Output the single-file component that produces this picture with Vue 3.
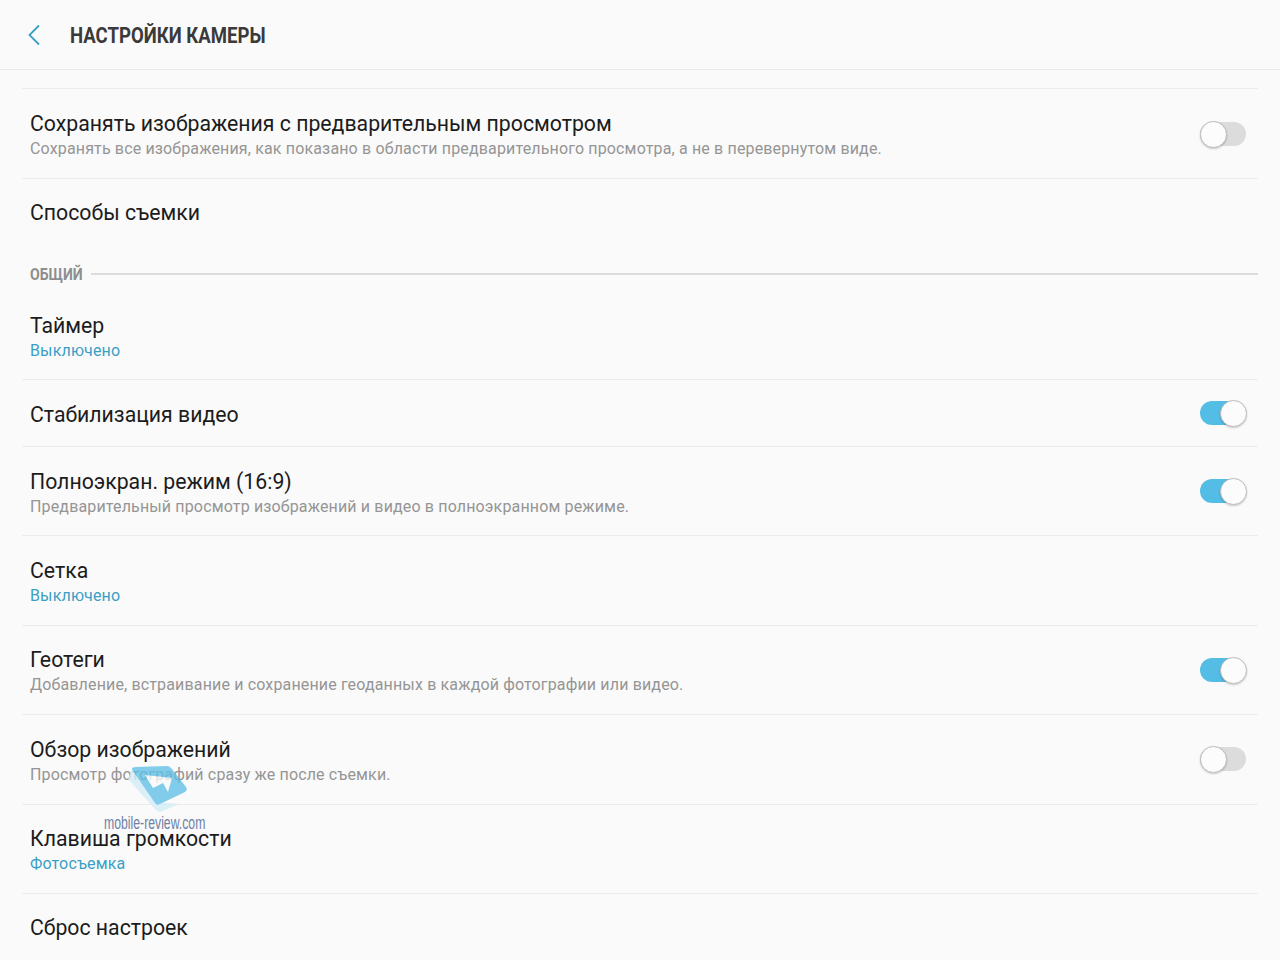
<template>
  <div class="screen">
    <header class="topbar">
      <svg class="back" width="14" height="22" viewBox="0 0 14 22">
        <path d="M12 1.5 L2.5 11 L12 20.5" fill="none" stroke="#3a9fc4" stroke-width="1.8" />
      </svg>
      <h1>НАСТРОЙКИ КАМЕРЫ</h1>
    </header>

    <div class="list">
      <template v-for="row in rows" :key="row.title">
        <div v-if="row.section" class="section">
          <span>{{ row.section }}</span>
          <i></i>
        </div>
        <div class="row" :class="{ first: row.first, plain: !row.sub && !row.value, nosep: row.nosep }">
          <div class="texts">
            <div class="title">{{ row.title }}</div>
            <div v-if="row.sub" class="sub">{{ row.sub }}</div>
            <div v-if="row.value" class="value">{{ row.value }}</div>
          </div>
          <div v-if="row.toggle !== undefined" class="toggle" :class="{ on: row.toggle }">
            <span class="knob"></span>
          </div>
        </div>
      </template>
    </div>

    <div class="watermark">
      <svg width="70" height="56" viewBox="0 0 70 56">
        <path d="M3 17 L30 47 Q33 51 38 49 L54 42 L30 40 L8 6 Z" fill="#d3edf8" />
        <path d="M8 9 Q5 5 11 5 L42 4 Q45 4 47 7 L61 25 Q63 28 60 30 L35 42 Q32 44 30 41 Z" fill="#5ec0e6" />
        <path d="M20 13 L47 16 L43 30 L38 21 L28 26 Z" fill="#fafafa" />
      </svg>
      <span>mobile-review.com</span>
    </div>
  </div>
</template>

<script setup>
const desc1 = 'Сохранять все изображения, как показано в области предварительного просмотра, а не в перевернутом виде.'

const rows = [
  { title: 'Сохранять изображения с предварительным просмотром', sub: desc1, toggle: false, first: true },
  { title: 'Способы съемки', nosep: true },
  { title: 'Таймер', value: 'Выключено', section: 'ОБЩИЙ' },
  { title: 'Стабилизация видео', toggle: true },
  { title: 'Полноэкран. режим (16:9)', sub: 'Предварительный просмотр изображений и видео в полноэкранном режиме.', toggle: true },
  { title: 'Сетка', value: 'Выключено' },
  { title: 'Геотеги', sub: 'Добавление, встраивание и сохранение геоданных в каждой фотографии или видео.', toggle: true },
  { title: 'Обзор изображений', sub: 'Просмотр фотографий сразу же после съемки.', toggle: false },
  { title: 'Клавиша громкости', value: 'Фотосъемка' },
  { title: 'Сброс настроек', nosep: true },
]
</script>

<style>
html, body {
  margin: 0;
  background: #fafafa;
  overflow: hidden;
}
</style>

<style scoped>
.screen {
  position: relative;
  width: 1280px;
  height: 960px;
  overflow: hidden;
  background: #fafafa;
  font-family: Roboto, "Noto Sans", sans-serif;
}
.topbar {
  display: flex;
  align-items: center;
  height: 69px;
  padding-left: 27px;
  border-bottom: 1px solid #e9e9e9;
}
.back {
  margin-right: 29px;
}
h1 {
  margin: 2px 0 0;
  font-size: 22px;
  font-weight: 700;
  color: #3a3a3a;
  transform: scaleX(0.844);
  transform-origin: left center;
}
.list {
  margin: 0 22px;
  padding-top: 18px;
}
.row {
  display: flex;
  align-items: center;
  justify-content: space-between;
  box-sizing: border-box;
  height: 89.4px;
  padding: 0 12px 0 8px;
  border-bottom: 1px solid #ececec;
}
.row.first {
  height: 91px;
  border-top: 1px solid #ececec;
}
.row.plain {
  height: 67px;
}
.row.nosep {
  height: 68px;
  border-bottom: none;
}
.texts {
  padding-top: 4px;
}
.row.plain .texts {
  padding-top: 3px;
}
.row.nosep .texts {
  padding-top: 0;
}
.section + .row {
  height: 89px;
}
.title {
  font-size: 21.25px;
  line-height: 26px;
  color: #1c1c1c;
}
.sub,
.value {
  font-size: 16px;
  letter-spacing: 0.15px;
  line-height: 22px;
  margin-top: 1px;
}
.sub {
  color: #959595;
}
.value {
  color: #3a9fc4;
}
.section {
  display: flex;
  align-items: center;
  height: 28px;
  margin: 13px 0 3px;
  padding-left: 8px;
  font-size: 16px;
  font-weight: 700;
  color: #8e8e8e;
}
.section span {
  width: 53px;
  white-space: nowrap;
  transform: scaleX(0.88);
  transform-origin: left center;
}
.section i {
  flex: 1;
  height: 2px;
  margin-left: 8px;
  background: #dcdcdc;
}
.toggle {
  position: relative;
  width: 46px;
  height: 24px;
  border-radius: 12px;
  background: #dcdcdc;
}
.toggle.on {
  background: #54bde5;
}
.knob {
  position: absolute;
  top: -1px;
  left: 0;
  box-sizing: border-box;
  width: 27px;
  height: 27px;
  border-radius: 50%;
  background: #fcfcfc;
  border: 1px solid #bdbdbd;
  box-shadow: 0 1px 2px rgba(0, 0, 0, 0.2);
}
.toggle.on .knob {
  left: 20px;
}
.watermark {
  position: absolute;
  left: 104px;
  top: 762px;
  width: 104px;
  pointer-events: none;
}
.watermark svg {
  display: block;
  margin-left: 21px;
  opacity: 0.78;
}
.watermark span {
  display: block;
  margin-top: -4px;
  font-family: "Liberation Sans", sans-serif;
  font-size: 18px;
  line-height: 18px;
  color: #6f7fa6;
  white-space: nowrap;
  transform: scaleX(0.68);
  transform-origin: left center;
}
</style>
